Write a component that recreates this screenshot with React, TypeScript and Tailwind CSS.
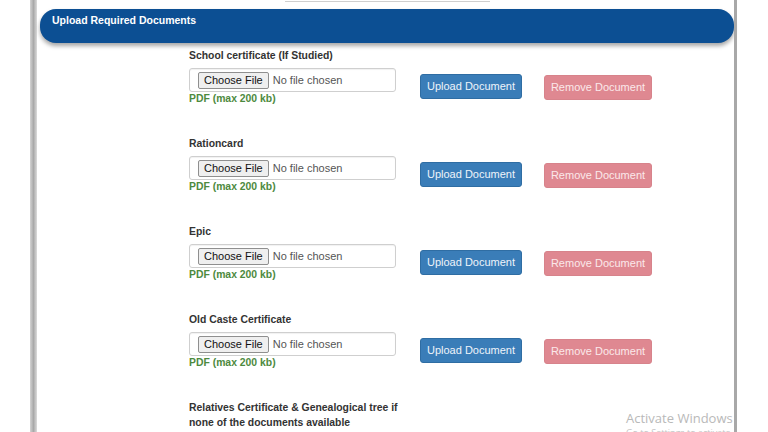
import React from "react";

const docs = [
  "School certificate (If Studied)",
  "Rationcard",
  "Epic",
  "Old Caste Certificate",
];

function DocRow({ label }: { label: string }) {
  return (
    <div className="flex flex-col pb-[31px]">
      <div className="h-[14px] leading-[14px] text-[10.4px] font-bold text-[#333333] mb-[5px]">{label}</div>
      <div className="flex items-start">
        <div className="flex flex-col w-[207px]">
          <div className="h-[24px] w-[207px] border border-[#cfcfcf] rounded-[3px] bg-white flex items-center pl-[8px] shadow-[inset_0_1px_1px_rgba(0,0,0,0.06)]">
            <span className="h-[17px] px-[5px] flex items-center border border-[#8f8f8f] rounded-[2px] bg-[#efefef] text-[11px] text-[#111] leading-none">
              Choose File
            </span>
            <span className="ml-[4px] text-[11px] text-[#555] leading-none">No file chosen</span>
          </div>
          <div className="h-[14px] leading-[14px] text-[10.4px] font-bold text-[#4d8a3e]">PDF (max 200 kb)</div>
        </div>
        <div className="ml-[24px] mt-[6px] w-[102px] h-[25px] rounded-[3px] bg-[#3a7db8] border border-[#2f6da3] flex items-center justify-center text-[11px] text-[#eef4fa]">
          Upload Document
        </div>
        <div className="ml-[22px] mt-[7px] w-[108px] h-[25px] rounded-[3px] bg-[#df8891] border border-[#d7838b] flex items-center justify-center text-[11px] text-[#fbe8ea]">
          Remove Document
        </div>
      </div>
    </div>
  );
}

export default function App() {
  return (
    <div
      className="relative w-[768px] h-[432px] overflow-hidden bg-white"
      style={{ fontFamily: '"Liberation Sans", Arial, sans-serif' }}
    >
      <div className="ml-[30px] w-[707px] h-[432px] flex">
        <div className="w-[7px] h-full bg-gradient-to-r from-[#d4d4d4] via-[#a9a9a9] to-[#dcdcdc]" />
        <div className="flex-1 h-full flex flex-col bg-white">
          <div className="h-[2px] ml-[248px] w-[205px] border-b border-[#cfcfcf]" />
          <div className="mt-[7px] ml-[3px] h-[34px] rounded-[16px] bg-[#0c4f93] shadow-[0_3px_4px_rgba(0,0,0,0.35)] pl-[12px] pt-[4px]">
            <div className="text-[10.5px] font-bold text-white leading-[14px]">Upload Required Documents</div>
          </div>
          <div className="ml-[152px] mt-[6px] flex flex-col">
            {docs.map((d) => (
              <DocRow key={d} label={d} />
            ))}
            <div className="w-[214px] text-[10.4px] font-bold text-[#333] leading-[15px] -mt-[1px]">
              Relatives Certificate &amp; Genealogical tree if none of the documents available
            </div>
          </div>
        </div>
        <div className="w-[3px] h-full bg-[#a8a8a8]" />
      </div>
      <div
        className="absolute left-[626px] top-[411px] text-[13px] text-[#b9b9b9] leading-[15px]"
        style={{ fontFamily: '"Open Sans", "Noto Sans", sans-serif' }}
      >
        Activate Windows
      </div>
      <div
        className="absolute left-[626px] top-[428px] text-[9px] text-[#c4c4c4] leading-[10px]"
        style={{ fontFamily: '"Open Sans", "Noto Sans", sans-serif' }}
      >
        Go to Settings to activate Windows.
      </div>
    </div>
  );
}
